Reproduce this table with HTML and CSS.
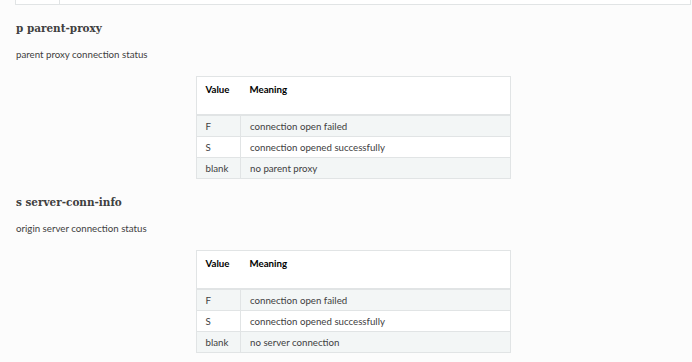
FILE: index.html
```
<html>

<head>
    <link rel="stylesheet" href="styles.css">
</head>

<body>
    <div class="content">
        <!-- tail of the previous table -->
        <div class="prev-table">
            <div class="prev-col"></div>
            <div class="prev-col wide"></div>
        </div>

        <div class="section">
            <h3 class="field-name">p parent-proxy</h3>
            <p class="field-desc">parent proxy connection status</p>
            <table class="docutils">
                <thead>
                    <tr>
                        <th class="col-value">Value</th>
                        <th>Meaning</th>
                    </tr>
                </thead>
                <tbody>
                    <tr class="row-odd">
                        <td>F</td>
                        <td>connection open failed</td>
                    </tr>
                    <tr class="row-even">
                        <td>S</td>
                        <td>connection opened successfully</td>
                    </tr>
                    <tr class="row-odd">
                        <td>blank</td>
                        <td>no parent proxy</td>
                    </tr>
                </tbody>
            </table>
        </div>

        <div class="section">
            <h3 class="field-name">s server-conn-info</h3>
            <p class="field-desc">origin server connection status</p>
            <table class="docutils">
                <thead>
                    <tr>
                        <th class="col-value">Value</th>
                        <th>Meaning</th>
                    </tr>
                </thead>
                <tbody>
                    <tr class="row-odd">
                        <td>F</td>
                        <td>connection open failed</td>
                    </tr>
                    <tr class="row-even">
                        <td>S</td>
                        <td>connection opened successfully</td>
                    </tr>
                    <tr class="row-odd">
                        <td>blank</td>
                        <td>no server connection</td>
                    </tr>
                </tbody>
            </table>
        </div>
    </div>
</body>

</html>
```

FILE: styles.css
```
* {
    margin: 0;
    padding: 0;
}

html {
    background: #fcfcfc;
}

body {
    margin: 0;
    font-family: Lato, "Liberation Sans", sans-serif;
    color: #404040;
    font-size: 9.7px;
}

.content {
    padding: 0 1px 0 15px;
}

/*previous table fragment*/

.prev-table {
    display: flex;
    height: 4px;
    border: 1px solid #e1e4e5;
    border-top: 0 none;
    background: white;
}

.prev-col {
    width: 43px;
}

.prev-col.wide {
    flex: 1;
    border-left: 1px solid #e1e4e5;
}

/*headings*/

.field-name {
    font-family: "DejaVu Serif", serif;
    font-stretch: condensed;
    font-size: 11.6px;
    line-height: 16px;
    font-weight: bold;
    color: #404040;
    margin-top: 15px;
    padding-left: 1px;
}

.field-desc {
    line-height: 14px;
    margin-top: 11px;
    padding-left: 1px;
}

/*tables*/

.docutils {
    width: 315px;
    margin: 15px auto 0 auto;
    border-collapse: collapse;
    border: 1px solid #e1e4e5;
    background: white;
    font-size: 9.7px;
    color: #404040;
}

.docutils th,
.docutils td {
    text-align: left;
    line-height: 12px;
    padding: 4px 9px;
}

.docutils th {
    color: #000;
    font-weight: bold;
    vertical-align: top;
    padding-top: 6px;
    padding-bottom: 19px;
    border-bottom: 2px solid #e1e4e5;
}

.docutils .col-value {
    width: 26px;
}

.docutils td {
    border-bottom: 1px solid #e1e4e5;
}

.docutils td + td {
    border-left: 1px solid #e1e4e5;
}

.docutils .row-odd td {
    background: #f3f6f6;
}
```
